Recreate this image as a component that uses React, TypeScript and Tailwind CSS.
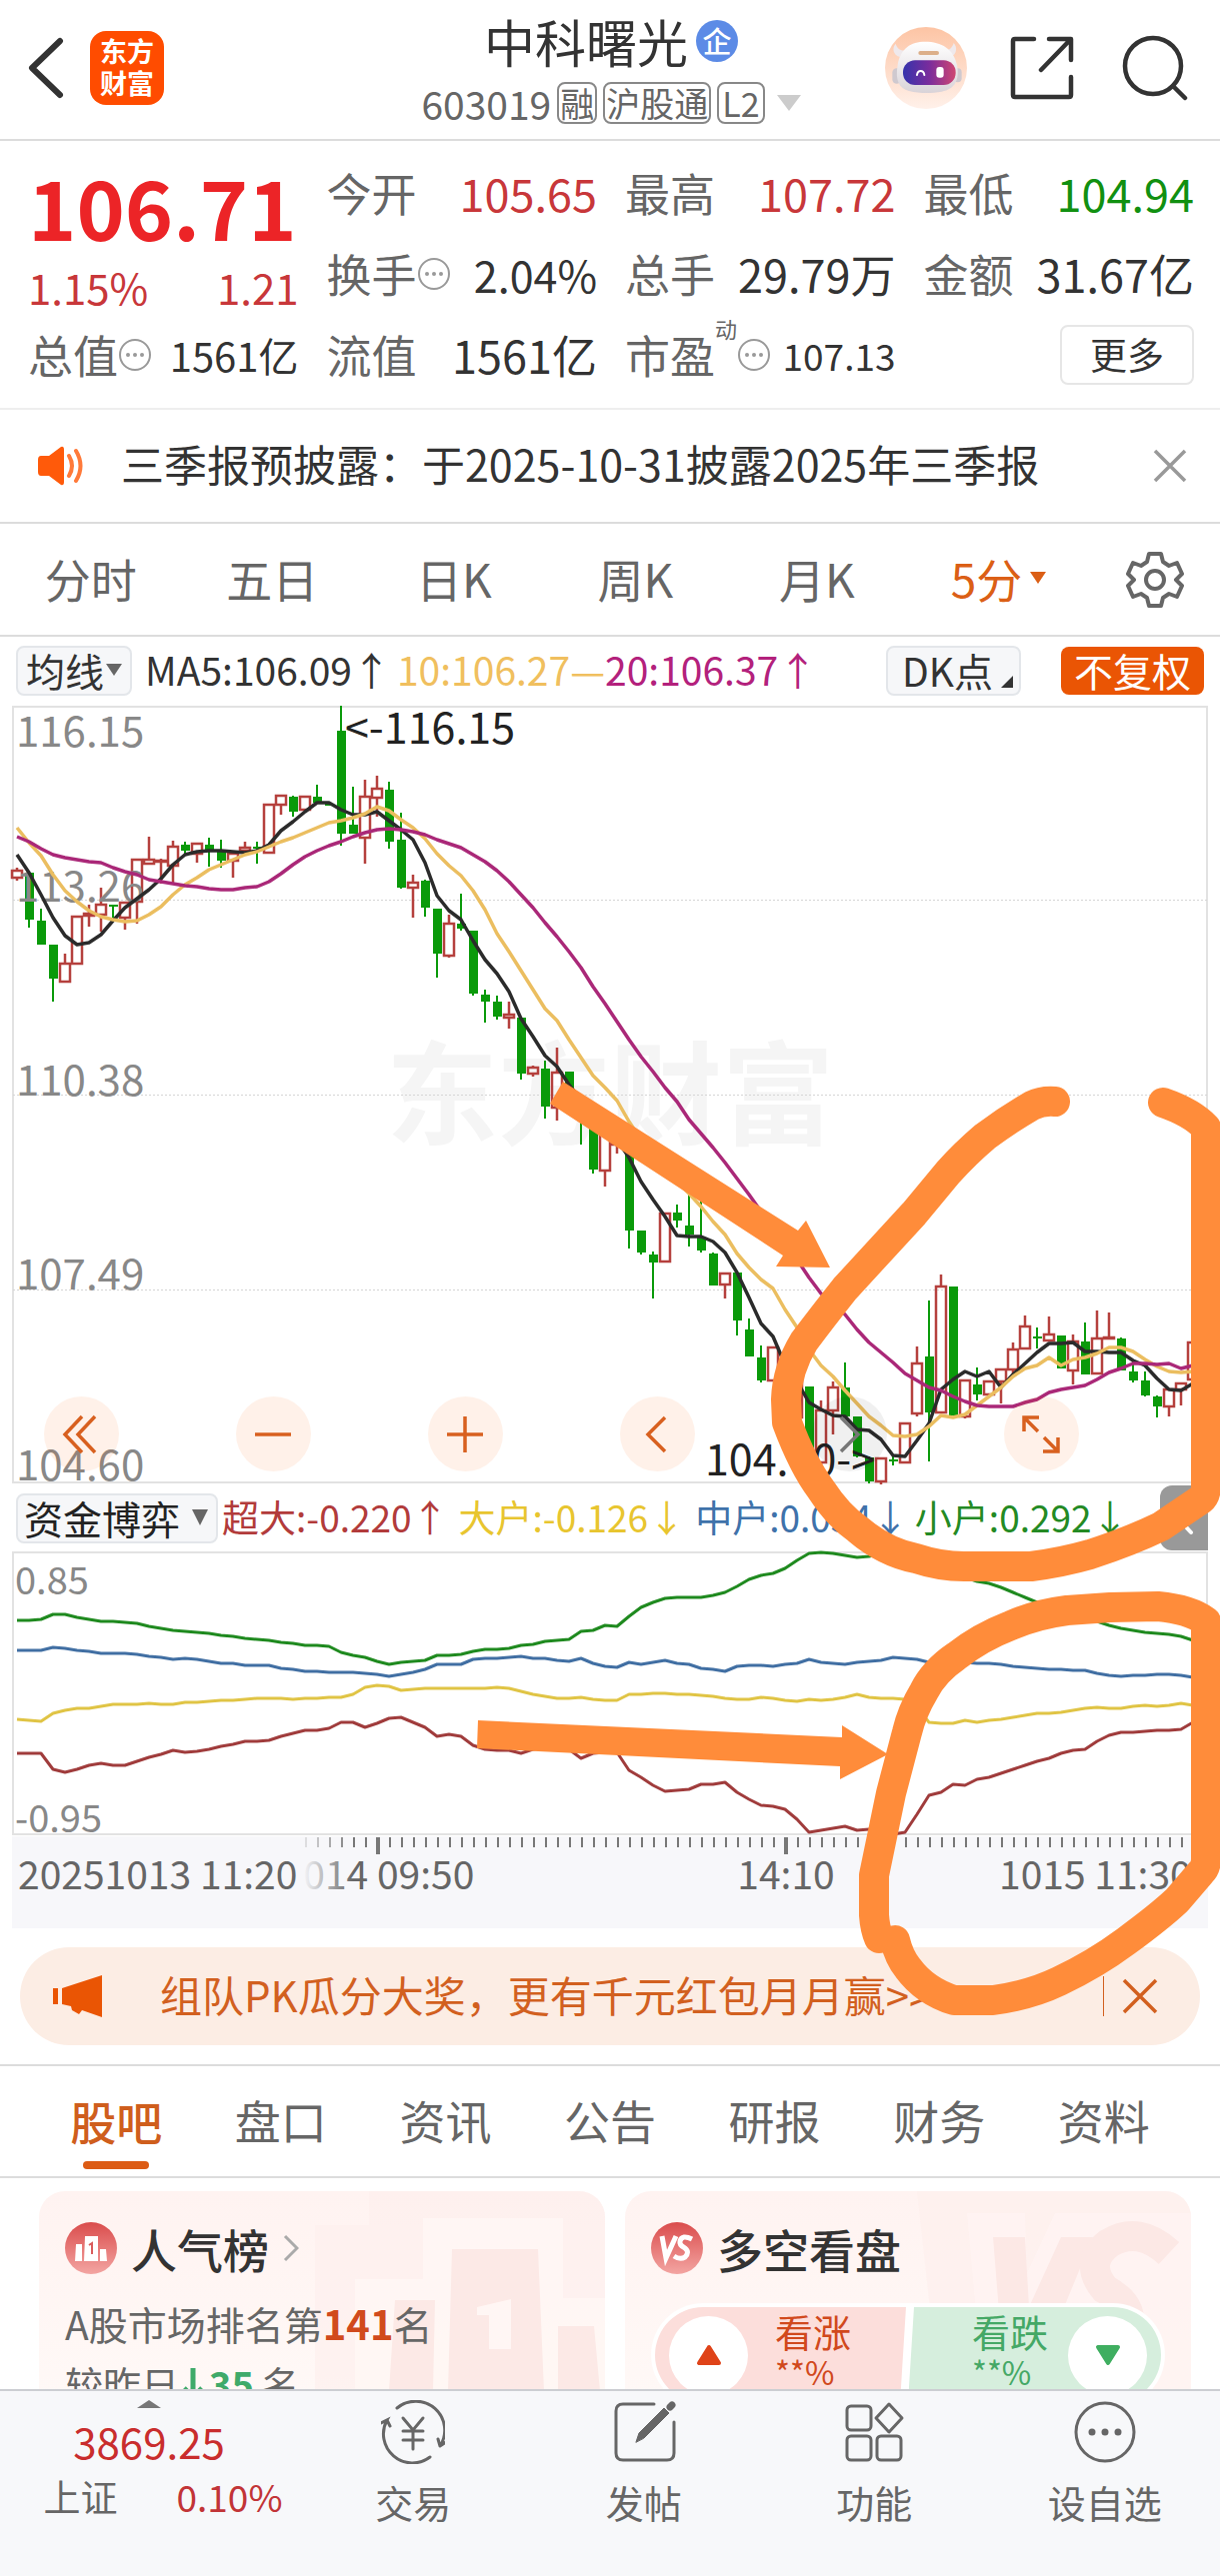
import React from "react";

/* [index, direction, high, bodyTop, bodyBottom, low] */
type Candle = [number, "u" | "d", number, number, number, number];

const candles: Candle[] = [
  [0, "u", 168, 171, 178, 181], [1, "d", 173, 173, 220, 228], [2, "d", 209, 221, 245, 245],
  [3, "d", 245, 245, 279, 302], [4, "u", 254, 264, 282, 282], [5, "u", 216, 217, 264, 264],
  [6, "u", 205, 214, 216, 227], [7, "u", 188, 205, 215, 232], [8, "d", 205, 205, 206, 220],
  [9, "u", 202, 203, 218, 230], [10, "u", 160, 160, 202, 224], [11, "u", 137, 160, 164, 164],
  [12, "u", 159, 161, 162, 184], [13, "u", 141, 147, 166, 183], [14, "d", 142, 145, 151, 155],
  [15, "u", 143, 144, 154, 163], [16, "d", 138, 145, 150, 167], [17, "d", 140, 150, 161, 168],
  [18, "u", 153, 154, 161, 178], [19, "u", 142, 148, 151, 156], [20, "d", 142, 147, 149, 164],
  [21, "u", 105, 105, 153, 153], [22, "u", 96, 96, 105, 115], [23, "d", 96, 97, 112, 117],
  [24, "u", 97, 97, 110, 110], [25, "d", 85, 97, 103, 104], [26, "d", 102, 104, 106, 106],
  [27, "d", 6, 31, 134, 146], [28, "d", 87, 125, 134, 134], [29, "u", 80, 97, 138, 164],
  [30, "u", 76, 89, 98, 117], [31, "d", 82, 90, 142, 149], [32, "d", 113, 140, 188, 189],
  [33, "u", 175, 183, 188, 218], [34, "d", 180, 181, 208, 217], [35, "d", 209, 209, 254, 278],
  [36, "u", 215, 224, 256, 258], [37, "d", 194, 224, 229, 231], [38, "d", 231, 231, 294, 296],
  [39, "d", 290, 295, 302, 323], [40, "d", 296, 302, 317, 320], [41, "u", 302, 315, 318, 329],
  [42, "d", 318, 318, 374, 380], [43, "u", 366, 368, 374, 377], [44, "d", 361, 369, 407, 419],
  [45, "u", 348, 373, 408, 421], [46, "d", 372, 372, 395, 395], [47, "d", 395, 400, 420, 445],
  [48, "d", 410, 415, 470, 474], [49, "u", 425, 430, 471, 487], [50, "u", 430, 432, 445, 454],
  [51, "d", 440, 440, 531, 549], [52, "d", 531, 531, 553, 555], [53, "d", 552, 555, 563, 599],
  [54, "u", 514, 514, 562, 562], [55, "d", 505, 513, 521, 528], [56, "d", 495, 526, 535, 547],
  [57, "d", 490, 538, 551, 553], [58, "d", 553, 554, 586, 586], [59, "u", 573, 574, 585, 599],
  [60, "d", 573, 573, 621, 636], [61, "d", 619, 630, 657, 657], [62, "d", 646, 658, 681, 683],
  [63, "u", 647, 648, 681, 681], [64, "d", 660, 665, 690, 695], [65, "u", 670, 675, 718, 718],
  [66, "d", 687, 687, 750, 750], [67, "u", 701, 711, 763, 765], [68, "u", 682, 688, 711, 735],
  [69, "d", 663, 688, 717, 717], [70, "d", 717, 717, 757, 758], [71, "d", 757, 758, 782, 784],
  [72, "u", 758, 759, 782, 785], [73, "d", 756, 760, 762, 766], [74, "u", 724, 724, 763, 763],
  [75, "u", 647, 664, 714, 717], [76, "d", 601, 657, 713, 762], [77, "u", 575, 587, 713, 714],
  [78, "d", 587, 587, 716, 716], [79, "u", 681, 681, 717, 719], [80, "d", 668, 685, 695, 701],
  [81, "u", 682, 682, 695, 695], [82, "u", 670, 670, 682, 704], [83, "u", 643, 650, 670, 674],
  [84, "u", 616, 627, 649, 649], [85, "d", 628, 637, 639, 649], [86, "u", 617, 635, 641, 641],
  [87, "d", 636, 636, 669, 669], [88, "u", 635, 642, 671, 685], [89, "d", 623, 642, 675, 675],
  [90, "u", 611, 639, 674, 674], [91, "u", 613, 638, 639, 640], [92, "d", 638, 639, 671, 671],
  [93, "d", 662, 672, 681, 683], [94, "d", 672, 681, 696, 697], [95, "d", 696, 697, 707, 718],
  [96, "u", 690, 690, 707, 717], [97, "u", 683, 684, 690, 706], [98, "u", 642, 643, 680, 680],
];

const ma5 = [155,173,195,218,236,245,243,235,221,208,199,190,179,165,155,152,151,151,152,153,151,145,131,122,112,103,103,110,115,115,112,121,130,140,163,196,211,220,241,260,274,292,319,337,356,367,385,400,415,427,440,458,482,500,517,536,537,537,542,553,573,598,624,637,665,682,703,710,716,717,730,731,740,756,757,741,724,690,680,672,677,672,688,675,664,653,644,644,643,652,652,653,653,661,666,679,690,691,684];
const ma10 = [128,143,156,175,191,202,211,217,220,222,221,215,207,195,185,178,170,165,160,155,152,147,142,138,133,128,123,121,118,114,107,111,120,128,139,154,166,176,191,210,234,252,271,290,309,321,340,358,376,388,401,422,440,455,468,482,494,507,522,535,554,568,580,589,610,628,650,666,677,691,704,717,726,736,737,735,727,716,718,715,706,697,688,677,669,666,658,666,660,658,654,648,648,652,660,667,672,673,672];
const ma20 = [137,142,149,155,158,160,162,163,168,172,175,180,182,184,186,187,189,190,190,188,187,182,174,165,157,151,146,142,137,133,130,129,130,132,135,140,144,148,155,162,171,182,195,208,223,237,252,268,287,304,322,340,357,372,388,402,420,434,448,463,479,495,512,528,544,560,578,594,604,615,630,643,653,663,674,681,688,691,697,702,706,707,707,707,703,700,693,690,688,686,680,673,669,664,664,665,664,669,666];

const retail = [141,141,140,135,135,138,140,142,142,143,144,147,149,151,152,153,154,156,157,159,160,161,163,164,166,166,167,173,176,178,182,185,183,182,181,176,176,175,172,170,170,169,166,165,162,161,160,152,151,146,147,137,128,123,119,118,118,118,116,113,107,100,96,94,89,81,74,73,74,76,78,77,74,75,77,80,84,88,93,98,102,104,108,113,118,123,127,131,135,139,142,146,149,151,153,154,155,157,161];
const medium = [171,171,171,168,169,171,172,174,174,174,175,177,178,180,179,180,182,184,184,186,186,186,189,190,192,192,193,193,193,194,195,197,195,193,190,185,185,185,180,179,179,178,177,179,179,181,182,179,184,187,188,183,185,183,181,184,185,189,190,192,187,186,186,187,185,184,180,183,184,185,183,182,181,178,179,180,183,183,182,183,184,184,185,187,188,189,190,190,191,191,194,196,197,196,196,195,195,196,198];
const large = [240,241,242,234,231,229,229,227,225,225,225,224,225,225,223,223,222,221,221,220,219,219,219,220,219,219,218,218,215,208,206,207,211,210,209,209,209,209,209,209,208,209,212,215,217,219,219,218,220,221,221,215,215,214,214,215,215,216,217,219,220,220,218,219,221,222,220,221,220,218,215,218,219,219,220,228,243,244,244,241,243,241,240,238,236,234,234,233,231,229,228,229,229,227,226,227,226,224,226];
const superLarge = [274,274,274,290,293,290,286,284,286,286,282,278,275,271,273,272,270,267,265,262,262,261,257,254,251,251,249,243,243,248,244,239,238,243,248,257,255,257,266,270,271,271,274,270,268,268,270,279,274,273,273,291,298,306,312,311,310,305,305,303,313,320,326,327,330,340,353,351,349,347,351,350,350,355,353,335,316,313,305,306,300,298,294,290,286,282,279,274,271,270,262,256,253,253,252,251,251,250,243];

const slotX = (i: number) => 17 + i * 12;
const points = (values: number[]) => values.map((v, i) => `${slotX(i)},${v}`).join(" ");

function Tri({ className, up = false }: { className: string; up?: boolean }) {
  return (
    <svg viewBox="0 0 16 12" className={className} preserveAspectRatio="none" aria-hidden="true">
      <path d={up ? "M0 12 8 0l8 12z" : "M0 0h16L8 12z"} fill="currentColor" />
    </svg>
  );
}

function Dots() {
  return (
    <svg viewBox="0 0 34 34" className="size-[34px] shrink-0 text-[#999]" aria-hidden="true">
      <circle cx="17" cy="17" r="15" fill="none" stroke="currentColor" strokeWidth="2" />
      <circle cx="10" cy="17" r="2" fill="currentColor" />
      <circle cx="17" cy="17" r="2" fill="currentColor" />
      <circle cx="24" cy="17" r="2" fill="currentColor" />
    </svg>
  );
}

function Header() {
  return (
    <header className="grid h-[141px] grid-cols-[1fr_auto_1fr] items-center border-b-2 border-[#dcdcdc] pr-[32px] pb-[4px] pl-[26px]">
      <div className="flex items-center gap-[26px]">
        <button aria-label="返回">
          <svg viewBox="0 0 38 62" className="h-[62px] w-[38px]">
            <path d="M34 4 6 31l28 27" fill="none" stroke="#333" strokeWidth="6" strokeLinecap="round" strokeLinejoin="round" />
          </svg>
        </button>
        <div className="flex size-[74px] flex-col items-center justify-center rounded-[16px] bg-[#ff4c00] pb-[2px] text-[27px] leading-[32px] font-bold text-white">
          <span>东方</span>
          <span>财富</span>
        </div>
      </div>
      <div className="flex flex-col items-center pb-[4px] pl-2">
        <h1 className="flex items-center gap-[8px] text-[51px] leading-[74px] text-[#333]">
          中科曙光
          <span className="flex size-[42px] items-center justify-center rounded-full bg-[#5c8be6] text-[29px] leading-none font-medium text-white">企</span>
        </h1>
        <button className="flex items-center text-[39px] leading-[50px] text-[#666]">
          603019
          <span className="ml-[6px] flex gap-[6px] text-[34px] leading-[38px]">
            <span className="rounded-[8px] border-2 border-[#888] px-px">融</span>
            <span className="rounded-[8px] border-2 border-[#888] px-px">沪股通</span>
            <span className="rounded-[8px] border-2 border-[#888] px-[3px]">L2</span>
          </span>
          <Tri className="ml-3 h-4 w-6 text-[#ccc]" />
        </button>
      </div>
      <div className="flex items-center justify-end">
        <button aria-label="智能助手">
          <svg viewBox="0 0 246 246" className="size-[82px]">
            <defs>
              <linearGradient id="halo" x2="0" y2="1">
                <stop stopColor="#fdc4a4" />
                <stop offset="1" stopColor="#fff1ea" />
              </linearGradient>
              <linearGradient id="visor">
                <stop stopColor="#3533ac" />
                <stop offset=".5" stopColor="#7a2c9c" />
                <stop offset="1" stopColor="#cf4672" />
              </linearGradient>
              <linearGradient id="helmet" x2="0" y2="1">
                <stop stopColor="#fff" />
                <stop offset="1" stopColor="#d9d3d8" />
              </linearGradient>
            </defs>
            <circle cx="123" cy="123" r="123" fill="url(#halo)" />
            <path d="M32 50c-12 12-8 34 12 40l16-20c-14 2-24-6-28-20zM206 48c12 12 10 36-10 42l-16-20c14 0 22-8 26-22z" fill="#efe9ec" />
            <rect x="22" y="124" width="26" height="46" rx="13" fill="#cfc9cf" />
            <rect x="206" y="124" width="24" height="42" rx="12" fill="#cfc9cf" />
            <path d="M120 44c50 0 86 22 96 70 8 46-6 72-46 80-32 6-66 6-98-2-30-8-42-32-34-78 8-50 40-70 82-70z" fill="url(#helmet)" />
            <rect x="100" y="72" width="62" height="12" rx="6" fill="#dcaf8a" />
            <rect x="54" y="100" width="158" height="74" rx="36" fill="url(#visor)" />
            <path d="M96 144c2-16 20-16 22 0" fill="none" stroke="#fff" strokeWidth="6" strokeLinecap="round" />
            <rect x="154" y="120" width="22" height="32" rx="9" fill="#fff" />
          </svg>
        </button>
        <button aria-label="分享" className="ml-[43px]">
          <svg viewBox="0 0 64 64" className="size-[64px]" fill="none" stroke="#333" strokeWidth="4.5" strokeLinecap="round" strokeLinejoin="round">
            <path d="M24 3H5q-2 0-2 2v54q0 2 2 2h54q2 0 2-2V41M39 3h22v21M60 4 31 34" />
          </svg>
        </button>
        <button aria-label="搜索" className="ml-[48px]">
          <svg viewBox="0 0 66 66" className="size-[66px]" fill="none" stroke="#333" strokeWidth="4.5" strokeLinecap="round">
            <circle cx="31" cy="31" r="28" />
            <path d="m51 51 12 12" />
          </svg>
        </button>
      </div>
    </header>
  );
}

function Stat({ label, value, tone = "text-[#333]", size = "text-[45px]", info = false, sup }: {
  label: string; value: string; tone?: string; size?: string; info?: boolean; sup?: string;
}) {
  return (
    <div className="flex h-[81px] items-center justify-between whitespace-nowrap">
      <dt className="flex items-center text-[45px] text-[#666]">
        {label}
        {sup && <sup className="self-start text-[22px] leading-[28px]">{sup}</sup>}
        {info && <Dots />}
      </dt>
      <dd className={`${size} ${tone}`}>{value}</dd>
    </div>
  );
}

function Quote() {
  return (
    <section className="border-b-2 border-[#eee] pt-[11px] pr-[26px] pb-[13px] pl-[28px]">
      <dl className="grid grid-cols-4 gap-x-7 leading-[60px]">
        <div className="row-span-2 flex flex-col">
          <dd className="mt-[12px] text-[82px] leading-[84px] font-bold whitespace-nowrap text-[#ec2427]">106.71</dd>
          <dd className="mt-[12px] flex justify-between text-[42px] leading-[54px] text-[#c8373a]">
            <span>1.15%</span>
            <span>1.21</span>
          </dd>
        </div>
        <Stat label="今开" value="105.65" tone="text-[#c8373a]" />
        <Stat label="最高" value="107.72" tone="text-[#c8373a]" />
        <Stat label="最低" value="104.94" tone="text-[#119011]" />
        <Stat label="换手" value="2.04%" size="text-[43px]" info />
        <Stat label="总手" value="29.79万" />
        <Stat label="金额" value="31.67亿" />
        <Stat label="总值" value="1561亿" size="text-[40px]" info />
        <Stat label="流值" value="1561亿" />
        <Stat label="市盈" value="107.13" size="text-[37px]" info sup="动" />
        <div className="flex items-center justify-end">
          <button className="rounded-[8px] border-2 border-[#e6e6e6] px-[28px] pb-[2px] text-[37px] leading-[54px] text-[#333]">更多</button>
        </div>
      </dl>
    </section>
  );
}

function Notice() {
  return (
    <section className="flex h-[114px] items-center border-b-2 border-[#dcdcdc] pr-[33px] pl-[37px]">
      <svg viewBox="0 0 48 40" className="mr-[36px] h-10 w-12 shrink-0" aria-hidden="true">
        <path d="M4 10h8L24 1q3-1 3 3v32q0 4-3 3L12 30H4q-3 0-3-4V14q0-4 3-4z" fill="#ff5a0a" />
        <path d="M32 10q6 10 0 20M39 5q9 15 0 30" fill="none" stroke="#ff7a3a" strokeWidth="4" strokeLinecap="round" />
      </svg>
      <a href="#notice" className="flex-1 pb-[6px] text-[43px] leading-[60px] whitespace-nowrap text-[#333]">三季报预披露：于2025-10-31披露2025年三季报</a>
      <button aria-label="关闭">
        <svg viewBox="0 0 34 34" className="size-[34px]">
          <path d="m2 2 30 30M32 2 2 32" stroke="#999" strokeWidth="3.5" />
        </svg>
      </button>
    </section>
  );
}

function Periods() {
  return (
    <nav className="flex h-[113px] items-center justify-between border-b-2 border-[#dcdcdc] pr-[36px] text-[46px] leading-[60px] text-[#666]">
      <div className="grid w-[92%] grid-cols-6 pb-[4px] whitespace-nowrap">
        <button>分时</button>
        <button>五日</button>
        <button>日K</button>
        <button>周K</button>
        <button>月K</button>
        <button className="flex items-center justify-center gap-2 text-[#db5f16]">
          5分
          <Tri className="h-3 w-4" />
        </button>
      </div>
      <button aria-label="设置">
        <svg viewBox="0 0 58 58" className="size-[58px]" fill="none" stroke="#666" strokeWidth="4" strokeLinejoin="round">
          <path d="M23 3h12l2 8 6 4 8-3 5 11-6 6 6 6-5 11-8-3-6 4-2 8H23l-2-8-6-4-8 3-5-11 6-6-6-6L7 12l8 3 6-4z" />
          <circle cx="29" cy="29" r="9" />
        </svg>
      </button>
    </nav>
  );
}

function AverageBar() {
  return (
    <div className="flex h-[69px] items-center pr-[16px] pb-[2px] pl-[16px] text-[39px] leading-[44px] whitespace-nowrap text-[#333]">
      <button className="flex items-center gap-[2px] rounded-[8px] border-2 border-[#e3e6ea] bg-[#f6f7f9] px-[8px] pb-[2px]">
        均线
        <Tri className="h-3 w-4 text-[#666]" />
      </button>
      <span className="ml-[13px] pb-[4px]">MA5:106.09↑</span>
      <span className="ml-[6px] pb-[4px] text-[#f0bf5e]">10:106.27—</span>
      <span className="pb-[4px] text-[#b3217c]">20:106.37↑</span>
      <button className="ml-auto flex items-end gap-2 rounded-[8px] border-2 border-[#e3e6ea] bg-[#f6f7f9] pr-[6px] pb-[2px] pl-[14px]">
        DK点
        <svg viewBox="0 0 12 12" className="mb-1 size-3" aria-hidden="true">
          <path d="M12 0v12H0z" fill="#333" />
        </svg>
      </button>
      <button className="ml-[40px] rounded-[8px] bg-[#ea5504] px-[13px] pb-[2px] leading-[46px] text-white">不复权</button>
    </div>
  );
}

function CandleMark({ c }: { c: Candle }) {
  const [i, dir, high, top, bottom, low] = c;
  const x = slotX(i);
  if (dir === "d") {
    return (
      <g fill="#0a9a0a">
        <rect x={x - 1} y={high} width="2" height={low - high} />
        <rect x={x - 4} y={top} width="9" height={Math.max(bottom - top, 2)} />
      </g>
    );
  }
  return (
    <g fill="none" stroke="#b5403d" strokeWidth="2.5">
      <path d={`M${x} ${high}V${top}M${x} ${bottom}V${low}`} />
      <rect x={x - 5} y={top} width="10" height={Math.max(bottom - top, 1)} />
    </g>
  );
}

function RoundButton({ label, d, muted = false }: { label: string; d: string; muted?: boolean }) {
  return (
    <button
      aria-label={label}
      className={`flex size-[75px] items-center justify-center rounded-full ${muted ? "bg-black/6 text-[#777]" : "bg-[#ff6010]/9 text-[#d8601f]"}`}
    >
      <svg viewBox="0 0 40 40" className="size-10" fill="none" stroke="currentColor" strokeWidth="3.5">
        <path d={d} />
      </svg>
    </button>
  );
}

function PriceChart() {
  const scale: [string, number][] = [["116.15", 747], ["113.26", 902], ["110.38", 1096], ["107.49", 1290], ["104.60", 1481]];
  return (
    <div className="relative mx-3">
      <svg viewBox="12 706 1196 778" className="block w-full overflow-visible" role="img" aria-label="5分钟K线图">
        <text x="610" y="1137" textAnchor="middle" fontSize="112" fontWeight="700" fill="#f5f5f5">东方财富</text>
        <rect x="13" y="707" width="1194" height="776" fill="none" stroke="#e2e2e2" strokeWidth="2" />
        <path d="M13 900.5h1194M13 1095.5h1194M13 1290.5h1194" stroke="#d5d5d5" strokeDasharray="2 2" />
        <g transform="translate(0 700)">
          {candles.map((c) => (
            <CandleMark key={c[0]} c={c} />
          ))}
        </g>
        <g fontSize="42" fill="#888">
          {scale.map(([t, y]) => (
            <text key={t} x="16" y={y}>{t}</text>
          ))}
        </g>
        <g transform="translate(0 700)" fill="none" strokeWidth="3.5" strokeLinejoin="round">
          <polyline points={points(ma5)} stroke="#2b2b2b" />
          <polyline points={points(ma10)} stroke="#ebbe60" />
          <polyline points={points(ma20)} stroke="#aa2878" />
        </g>
        <g fontSize="43" fill="#222">
          <text x="345" y="744">&lt;-116.15</text>
          <text x="705" y="1476">104.60-&gt;</text>
        </g>
      </svg>
      <div className="absolute bottom-3 left-[32px] flex w-[86.5%] justify-between">
        <RoundButton label="最早" d="M20 2 3 20l17 18M33 2 16 20l17 18" />
        <RoundButton label="缩小" d="M2 20h36" />
        <RoundButton label="放大" d="M2 20h36M20 2v36" />
        <RoundButton label="向前" d="M28 3 11 20l17 17" />
        <RoundButton label="向后" d="M12 3l17 17-17 17" muted />
        <RoundButton label="全屏" d="M3 17V3h15M4 4l13 13M37 23v14H22M36 36 23 23" />
      </div>
    </div>
  );
}

function FlowBar() {
  return (
    <div className="mx-3 flex h-[69px] items-center text-[37px] leading-[46px] whitespace-nowrap">
      <button className="ml-1 flex items-center gap-[12px] rounded-[8px] border-2 border-[#e3e6ea] bg-[#f6f7f9] px-[6px] pb-[2px] text-[39px] leading-[44px] text-[#222]">
        资金博弈
        <Tri className="mr-[2px] h-4 w-4 text-[#666]" />
      </button>
      <span className="ml-[4px] pb-[4px] text-[#b23b3b]">超大:-0.220↑</span>
      <span className="ml-[10px] pb-[4px] text-[#e8c52f]">大户:-0.126↓</span>
      <span className="ml-[10px] pb-[4px] text-[#3f72aa]">中户:0.054↓</span>
      <span className="ml-[6px] pb-[4px] text-[#248a24]">小户:0.292↓</span>
      <button aria-label="展开" className="ml-auto flex h-[65px] w-[48px] items-center justify-center rounded-l-[12px] bg-[#999]">
        <svg viewBox="0 0 20 34" className="h-[34px] w-5">
          <path d="M17 3 4 17l13 14" fill="none" stroke="#fff" strokeWidth="4" strokeLinecap="round" />
        </svg>
      </button>
    </div>
  );
}

function FlowChart() {
  const ticks = Array.from({ length: 74 }, (_, n) => n + 24);
  return (
    <div className="mx-3">
      <svg viewBox="12 1553 1196 376" className="block w-full overflow-visible" role="img" aria-label="资金博弈走势">
        <rect x="13" y="1553" width="1194" height="282" fill="none" stroke="#e2e2e2" strokeWidth="2" />
        <g transform="translate(0 1480)" fill="none" strokeWidth="3" strokeLinejoin="round">
          <polyline points={points(retail)} stroke="#1f8a1f" />
          <polyline points={points(medium)} stroke="#416fa3" />
          <polyline points={points(large)} stroke="#e0c445" />
          <polyline points={points(superLarge)} stroke="#a03c3c" />
        </g>
        <g fontSize="38" fill="#888">
          <text x="15" y="1595">0.85</text>
          <text x="15" y="1833">-0.95</text>
        </g>
        <rect x="12" y="1837" width="1196" height="92" fill="#f7f7fa" />
        <g stroke="#777" strokeWidth="2">
          {ticks.map((i) => (
            <path key={i} d={`M${slotX(i) + 1} 1838v10`} opacity={i < 28 ? (i - 23) / 5 : 1} />
          ))}
          <path d="M378 1838v17M786 1838v17" strokeWidth="4" />
        </g>
        <g fontSize="39" fill="#666">
          <text x="378" y="1890" textAnchor="middle">1014 09:50</text>
          <rect x="270" y="1856" width="33" height="42" fill="#f7f7fa" />
          <rect x="303" y="1856" width="50" height="42" fill="url(#fade)" />
          <text x="18" y="1890">20251013 11:20</text>
          <text x="786" y="1890" textAnchor="middle">14:10</text>
          <text x="999" y="1890">1015 11:30</text>
        </g>
        <defs>
          <linearGradient id="fade">
            <stop stopColor="#f7f7fa" />
            <stop offset="1" stopColor="#f7f7fa" stopOpacity="0" />
          </linearGradient>
        </defs>
      </svg>
    </div>
  );
}

function Promo() {
  return (
    <section className="mx-5 my-[19px] flex h-[98px] items-center rounded-full bg-[#fcede4] pr-[42px] pl-[32px] text-[#d2601f]">
      <svg viewBox="0 0 50 42" className="mr-[58px] h-[42px] w-[50px] shrink-0" aria-hidden="true">
        <path d="M1 13h5v16H1zM10 13 50 0v42l-20-7-3 4-7-4-1-4-9-2z" fill="#ea5504" />
      </svg>
      <a href="#promo" className="flex-1 pb-[4px] text-[42px] leading-[60px] whitespace-nowrap">组队PK瓜分大奖，更有千元红包月月赢&gt;&gt;</a>
      <span className="h-10 w-px bg-[#d2601f]" />
      <button aria-label="关闭" className="ml-[18px]">
        <svg viewBox="0 0 36 36" className="size-9">
          <path d="m2 2 32 32M34 2 2 34" stroke="currentColor" strokeWidth="3.5" />
        </svg>
      </button>
    </section>
  );
}

function SectionTabs() {
  return (
    <nav className="grid h-[114px] grid-cols-7 border-y-2 border-[#dcdcdc] px-[34px] text-[46px] leading-[60px] text-[#666]">
      <button className="flex flex-col items-center pt-[24px] font-medium text-[#cf5e1d]">
        股吧
        <span className="mt-[11px] h-2 w-[66px] rounded-full bg-[#dc5b14]" />
      </button>
      {["盘口", "资讯", "公告", "研报", "财务", "资料"].map((t) => (
        <button key={t} className="pb-[4px]">{t}</button>
      ))}
    </nav>
  );
}

function PopularityCard() {
  return (
    <a href="#rank" className="relative flex-1 overflow-hidden rounded-t-[26px] bg-linear-to-b from-[#fff3f1] to-[#fffaf8] px-[26px] pt-[30px] pb-8">
      <svg viewBox="0 0 290 200" className="absolute top-0 right-0 h-[200px] w-[290px]" aria-hidden="true">
        <path d="M0 34h54V0h236v200H0z" fill="#fdefec" opacity=".6" />
        <path d="M40 88h68V27h140v80h42v93H40z" fill="#fff7f5" opacity=".8" />
        <path d="M80 109h40l-2 91H74zM137 58h86l6 142h-96zM243 135h36l6 65h-42z" fill="#fce9e6" />
        <path d="M162 116l34-8v50h-22v-34h-12z" fill="#fff6f4" />
      </svg>
      <div className="relative flex items-center text-[46px] leading-[54px] font-medium text-[#333]">
        <svg viewBox="0 0 52 52" className="mr-[14px] size-[52px]" aria-hidden="true">
          <defs>
            <linearGradient id="badge" x2="0" y2="1">
              <stop stopColor="#da4c4c" />
              <stop offset="1" stopColor="#f3a5a2" />
            </linearGradient>
          </defs>
          <circle cx="26" cy="26" r="26" fill="url(#badge)" />
          <path d="M11 22h6v17h-7zM20 14h13v25H19zM35 27h6l1 12h-7z" fill="#fff" />
          <path d="M24 23l3-2v11" fill="none" stroke="#da5c5c" strokeWidth="2" />
        </svg>
        人气榜
        <svg viewBox="0 0 16 28" className="ml-[14px] h-7 w-4" aria-hidden="true">
          <path d="m2 2 12 12L2 26" fill="none" stroke="#aaa" strokeWidth="3" />
        </svg>
      </div>
      <p className="relative mt-[18px] text-[39px] leading-[60px] whitespace-nowrap text-[#666]">
        A股市场排名第<b className="text-[40px] text-[#d14a1c]">141</b>名
      </p>
      <p className="relative flex items-center text-[38px] leading-[60px] whitespace-nowrap text-[#666]">
        较昨日
        <svg viewBox="0 0 26 34" className="mx-px h-[34px] w-[26px]" aria-hidden="true">
          <path d="M13 2v28M4 22l9 9 9-9" fill="none" stroke="#3faa6a" strokeWidth="5" />
        </svg>
        <b className="mr-2 ml-[2px] text-[#3faa6a]">35</b>名
      </p>
    </a>
  );
}

function SentimentCard() {
  return (
    <section className="relative flex-1 overflow-hidden rounded-t-[26px] bg-linear-to-b from-[#fff3f1] to-[#fffaf8] px-[26px] pt-[30px] pb-8">
      <svg viewBox="0 0 274 200" className="absolute top-0 right-0 h-[200px] w-[274px]" aria-hidden="true">
        <path d="M0 0h274v200H22z" fill="#fdefec" opacity=".7" />
        <path d="M50 22h58l2 60 28-60h136v178H66z" fill="#fff4f2" opacity=".8" />
        <path d="M76 46h32l4 70 32-70h32l-62 150H88z" fill="#fce8e5" />
        <path d="M252 62q-30-28-60-10-26 20-4 46 36 20 18 48-24 22-58-8" fill="none" stroke="#fce8e5" strokeWidth="30" />
      </svg>
      <div className="relative flex items-center text-[46px] leading-[54px] font-medium text-[#333]">
        <svg viewBox="0 0 52 52" className="mr-[14px] size-[52px]" aria-hidden="true">
          <circle cx="26" cy="26" r="26" fill="url(#badge)" />
          <path d="M11 14l4 22 10-22M41 17q-10-5-12 2-1 4 5 7 5 4 0 9-5 3-11-1" fill="none" stroke="#fff" strokeWidth="5" />
        </svg>
        多空看盘
      </div>
      <div className="relative mt-[28px] flex h-[104px] overflow-hidden rounded-full border-4 border-white/80 bg-white text-[38px]">
        <button className="flex flex-1 items-center bg-[#fcdedb] pl-[14px] text-left text-[#d1491d]">
          <span className="mr-[27px] flex size-[79px] shrink-0 items-center justify-center rounded-full bg-white">
            <svg viewBox="0 0 26 22" className="h-[22px] w-[26px]" aria-hidden="true">
              <path d="M13 3 3 19h20z" fill="#df4318" stroke="#df4318" strokeWidth="4" strokeLinejoin="round" />
            </svg>
          </span>
          <span className="flex flex-col pb-[10px]">
            <span className="leading-[42px]">看涨</span>
            <span className="text-[32px] leading-[38px]">**%</span>
          </span>
        </button>
        <svg viewBox="0 0 16 104" className="h-full w-4" preserveAspectRatio="none" aria-hidden="true">
          <path d="M0 0h6L0 104z" fill="#fcdedb" />
          <path d="M16 0h-2L8 104h8z" fill="#d6eedd" />
        </svg>
        <button className="flex flex-1 items-center justify-end bg-[#d6eedd] pr-[14px] text-left text-[#45a866]">
          <span className="flex flex-col pb-[10px]">
            <span className="leading-[42px]">看跌</span>
            <span className="text-[32px] leading-[38px]">**%</span>
          </span>
          <span className="ml-[20px] flex size-[79px] shrink-0 items-center justify-center rounded-full bg-white">
            <svg viewBox="0 0 26 22" className="h-[22px] w-[26px]" aria-hidden="true">
              <path d="M13 19 3 3h20z" fill="#3fae60" stroke="#3fae60" strokeWidth="4" strokeLinejoin="round" />
            </svg>
          </span>
        </button>
      </div>
    </section>
  );
}

/* Hand-drawn highlights over the two charts */
function Markup() {
  return (
    <svg viewBox="0 0 1220 2390" className="pointer-events-none absolute inset-x-0 top-0 w-full" aria-hidden="true">
      <g fill="none" stroke="#ff8c3a" strokeWidth="30" strokeLinecap="round" strokeLinejoin="round">
        <path d="M1055 1102Q1042 1101 1032 1106 1008 1120 985 1137 965 1154 948 1173L914 1214 845 1289Q822 1318 804 1342 787 1370 786 1400L787 1423Q803 1466 821 1490 838 1516 858 1530 885 1553 916 1559 940 1567 964 1567H1031Q1062 1563 1090 1555 1130 1542 1161 1527L1201 1500Q1206 1496 1206 1486V1128Q1192 1113 1163 1103" />
        <path d="M895 1941Q899 1958 908 1969 925 1992 954 2001H993Q1030 1996 1059 1982 1095 1965 1126 1942 1160 1917 1177 1901L1201 1873Q1206 1868 1206 1860V1622Q1190 1610 1158 1607L1110 1608 1067 1611Q1036 1615 1011 1626 980 1638 956 1657 934 1672 924 1692 912 1712 907 1733L891 1794 874 1876V1916Q875 1930 879 1939" />
      </g>
      <path d="M563 1082 798 1231 806 1221 830 1268 776 1267 783 1256 550 1104zM478 1721 842 1738V1726L888 1755 840 1780V1767L477 1749z" fill="#ff8c3a" />
    </svg>
  );
}

function BottomBar() {
  const item = "flex flex-1 flex-col items-center pt-[9px]";
  const icon = "mb-[11px] size-16";
  return (
    <nav className="flex h-[187px] shrink-0 border-t-2 border-[#ccced2] bg-[#f7f8fa] text-[38px] leading-[54px] text-[#666]">
      <button className="flex w-[298px] flex-col items-center pt-[9px]">
        <Tri className="h-2 w-6 text-[#777]" up />
        <span className="mt-[5px] text-[42px] leading-[56px] text-[#c92d2d]">3869.25</span>
        <span className="flex gap-[59px] pl-7 text-[37px]">
          上证<span className="text-[#c23437]">0.10%</span>
        </span>
      </button>
      <button className={item}>
        <svg viewBox="0 0 64 64" className={icon} fill="none" stroke="#666" strokeWidth="3" strokeLinecap="round">
          <path d="M16 8A29 29 0 0 1 59 46l6-4M59 46l-2-7M49 57A29 29 0 0 1 6 20l-6 3M6 20l3 6" />
          <path d="M22 18l10 12 10-12M32 30v19M22 31h20M22 40h20" />
        </svg>
        交易
      </button>
      <button className={item}>
        <svg viewBox="0 0 64 64" className={icon} fill="none" stroke="#666" strokeWidth="3" strokeLinecap="round">
          <path d="M42 4H11q-7 0-7 7v42q0 7 7 7h44q7 0 7-7V22" />
          <path d="M24 42l3-9 25-25 5 5-25 25z" fill="#666" strokeWidth="1" />
          <path d="M58 7l2-2" strokeWidth="7" />
        </svg>
        发帖
      </button>
      <button className={item}>
        <svg viewBox="0 0 64 64" className={icon} fill="none" stroke="#666" strokeWidth="3" strokeLinejoin="round">
          <rect x="5" y="6" width="24" height="24" rx="4" />
          <rect x="5" y="36" width="24" height="24" rx="4" />
          <rect x="35" y="36" width="24" height="24" rx="4" />
          <path d="M47 4l13 14-13 14-13-14z" />
        </svg>
        功能
      </button>
      <button className={item}>
        <svg viewBox="0 0 64 64" className={icon} fill="none" stroke="#666" strokeWidth="3">
          <circle cx="32" cy="32" r="29" />
          <g fill="#666" stroke="none">
            <circle cx="19" cy="32" r="3.5" />
            <circle cx="32" cy="32" r="3.5" />
            <circle cx="45" cy="32" r="3.5" />
          </g>
        </svg>
        设自选
      </button>
    </nav>
  );
}

export default function App() {
  return (
    <div className="flex h-screen flex-col bg-white font-['Noto_Sans_CJK_SC',sans-serif] text-[#333]">
      <main className="relative min-h-0 flex-1 overflow-hidden">
        <Header />
        <Quote />
        <Notice />
        <Periods />
        <AverageBar />
        <PriceChart />
        <FlowBar />
        <FlowChart />
        <Promo />
        <SectionTabs />
        <div className="flex gap-5 pt-[13px] pr-[29px] pl-[39px]">
          <PopularityCard />
          <SentimentCard />
        </div>
        <Markup />
      </main>
      <BottomBar />
    </div>
  );
}
